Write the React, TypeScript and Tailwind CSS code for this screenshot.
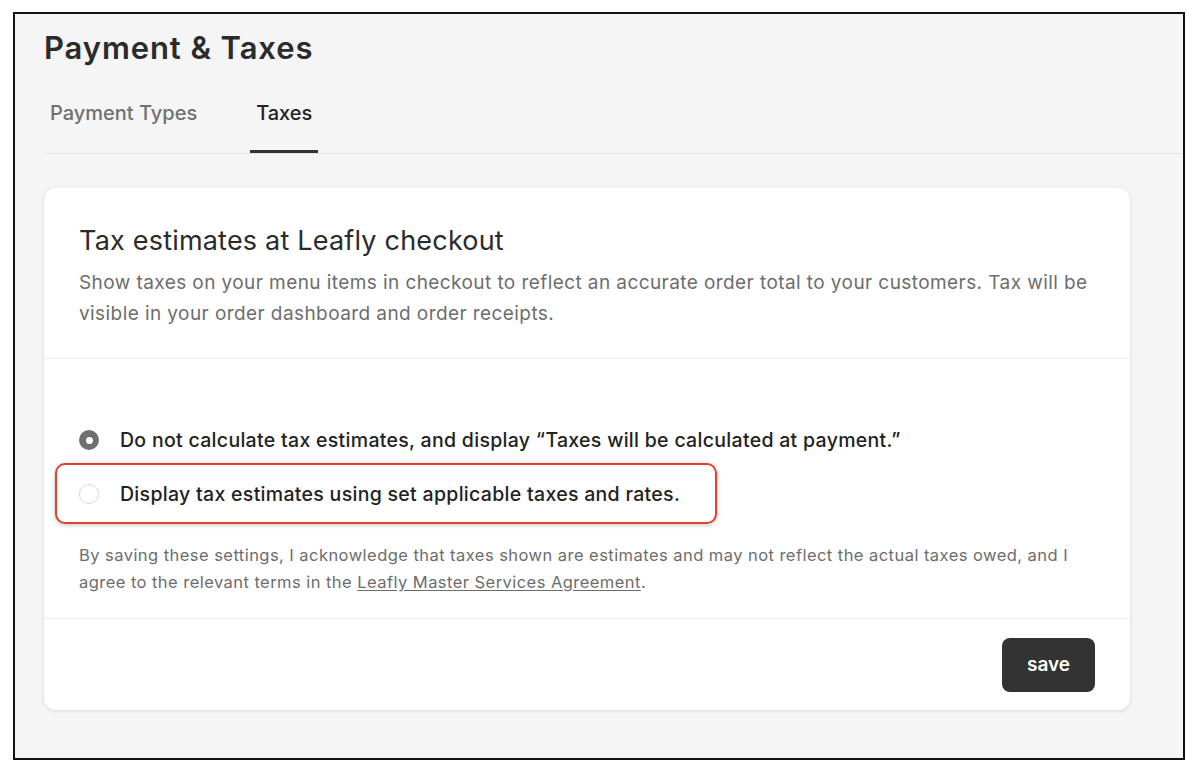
import React from "react";

function Radio({ checked }: { checked?: boolean }) {
  if (checked) {
    return (
      <span className="flex h-[20px] w-[20px] shrink-0 items-center justify-center rounded-full bg-[#6f6f6f]">
        <span className="h-[7px] w-[7px] rounded-full bg-white" />
      </span>
    );
  }
  return <span className="h-[20px] w-[20px] shrink-0 rounded-full border border-[#d9d9d9] bg-white" />;
}

function TaxCard() {
  return (
    <div className="mt-[34px] mr-[53px] rounded-[12px] bg-white shadow-[0_1px_4px_rgba(0,0,0,0.12)]">
      <div className="border-b border-[#ececec] px-[35px] pt-[37px] pb-[29px]">
        <h2 className="text-[27px] leading-[32px] tracking-[0.2px] text-[#2b2b2b]">Tax estimates at Leafly checkout</h2>
        <p className="mt-[10px] text-[19px] leading-[31px] tracking-[0.42px] text-[#6d6d6d]">
          Show taxes on your menu items in checkout to reflect an accurate order total to your customers. Tax will be
          visible in your order dashboard and order receipts.
        </p>
      </div>
      <div className="border-b border-[#ececec] px-[35px] pt-[67px] pb-[22px]">
        <div className="flex flex-col gap-[26px]">
          <label className="flex items-center gap-[21px] text-[19.5px] leading-[28px] font-medium tracking-[0.3px] text-[#222]">
            <Radio checked />
            Do not calculate tax estimates, and display “Taxes will be calculated at payment.”
          </label>
          <div className="relative">
            <label className="flex items-center gap-[21px] text-[19.5px] leading-[28px] font-medium tracking-[0.3px] text-[#222]">
              <Radio />
              Display tax estimates using set applicable taxes and rates.
            </label>
            <div className="pointer-events-none absolute top-[-17px] left-[-24px] h-[61px] w-[662px] rounded-[10px] border-2 border-[#e0402f] shadow-[0_1px_4px_rgba(0,0,0,0.25)]" />
          </div>
        </div>
        <p className="mt-[34px] text-[16.5px] leading-[27px] tracking-[0.45px] text-[#6d6d6d]">
          By saving these settings, I acknowledge that taxes shown are estimates and may not reflect the actual taxes owed, and I
          agree to the relevant terms in the <span className="underline underline-offset-2">Leafly Master Services Agreement</span>.
        </p>
      </div>
      <div className="flex justify-end px-[35px] pt-[19px] pb-[18px]">
        <button className="h-[54px] w-[93px] rounded-[8px] bg-[#333] text-[19px] font-semibold text-white">save</button>
      </div>
    </div>
  );
}

export default function App() {
  return (
    <div className="h-[774px] w-full bg-white pt-[12px] pl-[13px]" style={{ fontFamily: "Inter, 'Noto Sans', sans-serif" }}>
      <div className="h-[748px] w-[1172px] border-2 border-[#111] bg-[#f5f5f5] pt-[15px] pl-[29px]">
        <h1 className="text-[31px] leading-[38px] font-semibold tracking-[0.9px] text-[#2b2b2b]">Payment &amp; Taxes</h1>
        <div className="mt-[34px] flex gap-[47px] border-b border-[#e3e3e3]">
          <div className="px-[6px] pb-[28px] text-[20px] leading-[24px] font-medium text-[#707070]">Payment Types</div>
          <div className="border-b-[3px] border-[#333] px-[6px] pb-[25px] text-[20px] leading-[24px] font-medium text-[#222]">
            Taxes
          </div>
        </div>
        <TaxCard />
      </div>
    </div>
  );
}
